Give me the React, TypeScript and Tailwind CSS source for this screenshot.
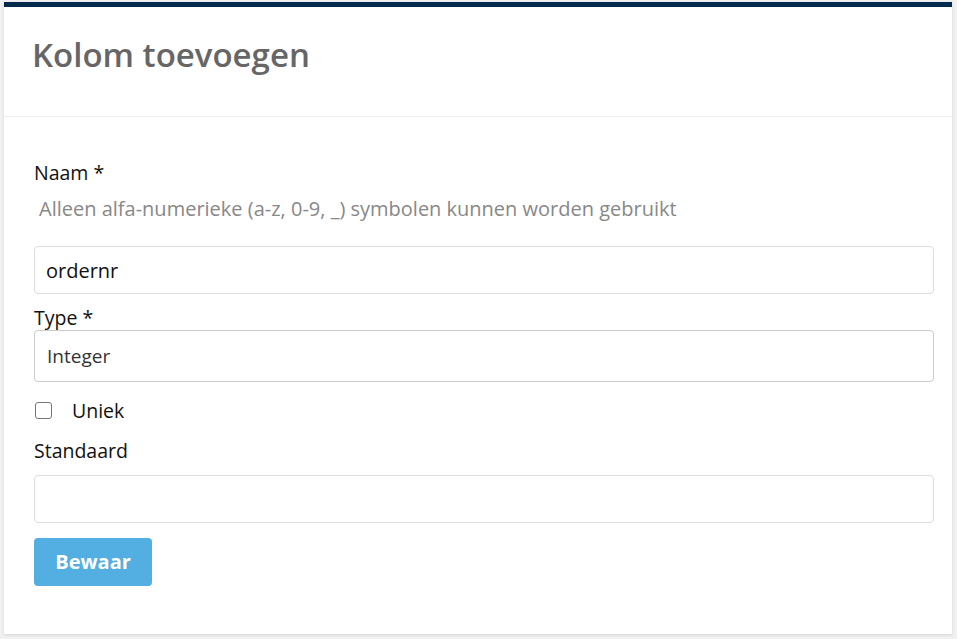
import React from "react";

export default function App() {
  return (
    <div
      className="min-h-[639px] bg-[#f1f1f1] pt-[2px] pr-[5px] pb-[5px] pl-[4px]"
      style={{ fontFamily: '"Open Sans", "Liberation Sans", sans-serif' }}
    >
      <div className="border-t-[5px] border-[#022a4d] bg-white shadow-[0_1px_3px_rgba(0,0,0,0.12)]">
        <div className="border-b border-[#f0f0f0] pl-[28px] pr-[18px] pt-[26px] pb-[39px]">
          <h1 className="text-[33px] font-semibold leading-[44px] text-[#666666]">
            Kolom toevoegen
          </h1>
        </div>

        <form className="pl-[30px] pr-[18px] pt-[43px] pb-[48px]" onSubmit={(e) => e.preventDefault()}>
          <label className="block text-[19.5px] leading-[26px] text-[#111]">Naam *</label>
          <p className="mt-[11px] pl-[5px] text-[20px] leading-[24px] text-[#888888]">
            Alleen alfa-numerieke (a-z, 0-9, _) symbolen kunnen worden gebruikt
          </p>
          <input
            defaultValue="ordernr"
            className="mt-[25px] block h-[48px] w-full rounded-[4px] border border-[#dddddd] px-[11px] text-[20px] text-[#111] outline-none"
          />

          <label className="mt-[11px] block text-[19.5px] leading-[25px] text-[#111]">Type *</label>
          <div className="flex h-[52px] w-full items-center rounded-[4px] border border-[#cccccc] px-[12px] text-[19px] text-[#333]">
            Integer
          </div>

          <label className="mt-[16px] flex items-center text-[19.5px] leading-[26px] text-[#111]">
            <span className="ml-[1px] mr-[20px] -mt-[2px] h-[17px] w-[17px] rounded-[3px] border-[1.5px] border-[#767676] bg-white" />
            Uniek
          </label>

          <label className="mt-[14px] block text-[19.5px] leading-[26px] text-[#111]">Standaard</label>
          <input className="mt-[11px] block h-[48px] w-full rounded-[4px] border border-[#dddddd] px-[11px] text-[20px] outline-none" />

          <button
            type="submit"
            className="mt-[15px] h-[48px] w-[118px] rounded-[4px] bg-[#53aee1] text-[20px] font-bold text-white"
          >
            Bewaar
          </button>
        </form>
      </div>
    </div>
  );
}
